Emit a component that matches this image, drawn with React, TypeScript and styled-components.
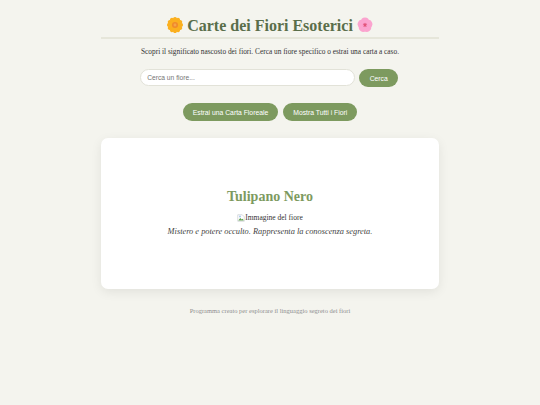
import styled, { createGlobalStyle } from 'styled-components'

const GlobalStyle = createGlobalStyle`
  html, body {
    margin: 0;
    padding: 0;
    background-color: #f4f4ee;
  }
  body {
    font-family: "Liberation Serif", "DejaVu Serif", serif;
    color: #333;
  }
`

const Page = styled.div`
  width: 338px;
  min-height: 405px;
  margin: 0 auto;
  padding-top: 15px;
  box-sizing: border-box;
  display: flex;
  flex-direction: column;
  align-items: stretch;
`

const Title = styled.h1`
  margin: 0;
  height: 22px;
  border-bottom: 2px solid #e6e6da;
  display: flex;
  justify-content: center;
  align-items: flex-start;
  gap: 4px;
  font-size: 16px;
  line-height: 21px;
  font-weight: bold;
  color: #5a6e4a;
`

const Intro = styled.p`
  margin: 8px 0 0;
  text-align: center;
  font-size: 7.35px;
  line-height: 10px;
  color: #333;
`

const SearchRow = styled.div`
  margin-top: 12px;
  padding-right: 1.5px;
  display: flex;
  justify-content: center;
  gap: 4px;
`

const SearchInput = styled.input`
  width: 215px;
  height: 17px;
  box-sizing: border-box;
  padding: 0 6px;
  border: 0.75px solid #e2e2d8;
  border-radius: 9px;
  background: #fff;
  font-family: "Liberation Sans", Arial, sans-serif;
  font-size: 6.7px;
  outline: none;

  &::placeholder {
    color: #757575;
    opacity: 1;
  }
`

const Button = styled.button`
  height: 18px;
  padding: 0 10px;
  border: none;
  border-radius: 9px;
  background-color: #7d9a5f;
  color: #fff;
  font-family: "Liberation Sans", Arial, sans-serif;
  font-size: 6.8px;
`

const SearchButton = styled(Button)`
  padding: 0 10.5px;
`

const ActionRow = styled.div`
  margin-top: 16px;
  display: flex;
  justify-content: center;
  gap: 5px;
`

const Card = styled.section`
  margin-top: 17px;
  height: 151px;
  background: #fff;
  border-radius: 7px;
  box-shadow: 0 3px 11px rgba(0, 0, 0, 0.08);
  display: flex;
  flex-direction: column;
  align-items: center;
  justify-content: center;
`

const FlowerName = styled.h2`
  margin: 0;
  font-size: 14px;
  line-height: 16px;
  font-weight: bold;
  color: #7d9a5f;
`

const BrokenImage = styled.div`
  margin-top: 8px;
  display: flex;
  align-items: center;
  font-size: 7.5px;
  line-height: 10px;
  color: #333;
`

const Meaning = styled.p`
  margin: 2px 0 0;
  font-size: 8.35px;
  line-height: 14px;
  font-style: italic;
  color: #444;
`

const Footer = styled.footer`
  margin-top: 16.5px;
  text-align: center;
  font-size: 6.5px;
  line-height: 9px;
  color: #8e8e8e;
`

function Sunflower() {
  const petals = Array.from({ length: 12 }, (_, i) => i * 30)
  return (
    <svg width="16" height="16" viewBox="0 0 34 34" style={{ marginTop: 2 }}>
      {petals.map((a) => (
        <ellipse key={a} cx="17" cy="6" rx="4.6" ry="6" fill="#fbb01f" transform={`rotate(${a} 17 17)`} />
      ))}
      <circle cx="17" cy="17" r="11" fill="#fbb01f" />
      <circle cx="17" cy="17" r="6.5" fill="#f08a2c" />
      <circle cx="17" cy="17" r="3" fill="#f4a548" />
    </svg>
  )
}

function Blossom() {
  const petals = [0, 72, 144, 216, 288]
  return (
    <svg width="16" height="16" viewBox="0 0 34 34" style={{ marginTop: 2 }}>
      {petals.map((a) => (
        <circle key={a} cx="17" cy="9.5" r="8.5" fill="#fba4cf" transform={`rotate(${a} 17 17)`} />
      ))}
      <circle cx="17" cy="17" r="5" fill="#f78bbd" />
      <path d="M17 13v4M13.5 15.5L17 17M20.5 15.5L17 17M15 20.5L17 17M19 20.5L17 17" stroke="#d9425e" strokeWidth="1.6" />
    </svg>
  )
}

function BrokenIcon() {
  return (
    <svg width="8" height="8" viewBox="0 0 16 16">
      <path d="M1.5 1.5h9l4 4v9h-13z" fill="#fff" stroke="#b5b9bf" strokeWidth="1" />
      <path d="M2.5 13l4-5 3 3 2-1.5 2 3.5z" fill="#5fa04e" />
      <circle cx="6" cy="5" r="2" fill="#a9c6ee" />
    </svg>
  )
}

function App() {
  return (
    <>
      <GlobalStyle />
      <Page>
        <Title>
          <Sunflower />
          <span>Carte dei Fiori Esoterici</span>
          <Blossom />
        </Title>
        <Intro>Scopri il significato nascosto dei fiori. Cerca un fiore specifico o estrai una carta a caso.</Intro>
        <SearchRow>
          <SearchInput placeholder="Cerca un fiore..." />
          <SearchButton>Cerca</SearchButton>
        </SearchRow>
        <ActionRow>
          <Button>Estrai una Carta Floreale</Button>
          <Button>Mostra Tutti i Fiori</Button>
        </ActionRow>
        <Card>
          <FlowerName>Tulipano Nero</FlowerName>
          <BrokenImage>
            <BrokenIcon />
            Immagine del fiore
          </BrokenImage>
          <Meaning>Mistero e potere occulto. Rappresenta la conoscenza segreta.</Meaning>
        </Card>
        <Footer>Programma creato per esplorare il linguaggio segreto dei fiori</Footer>
      </Page>
    </>
  )
}

export default App
